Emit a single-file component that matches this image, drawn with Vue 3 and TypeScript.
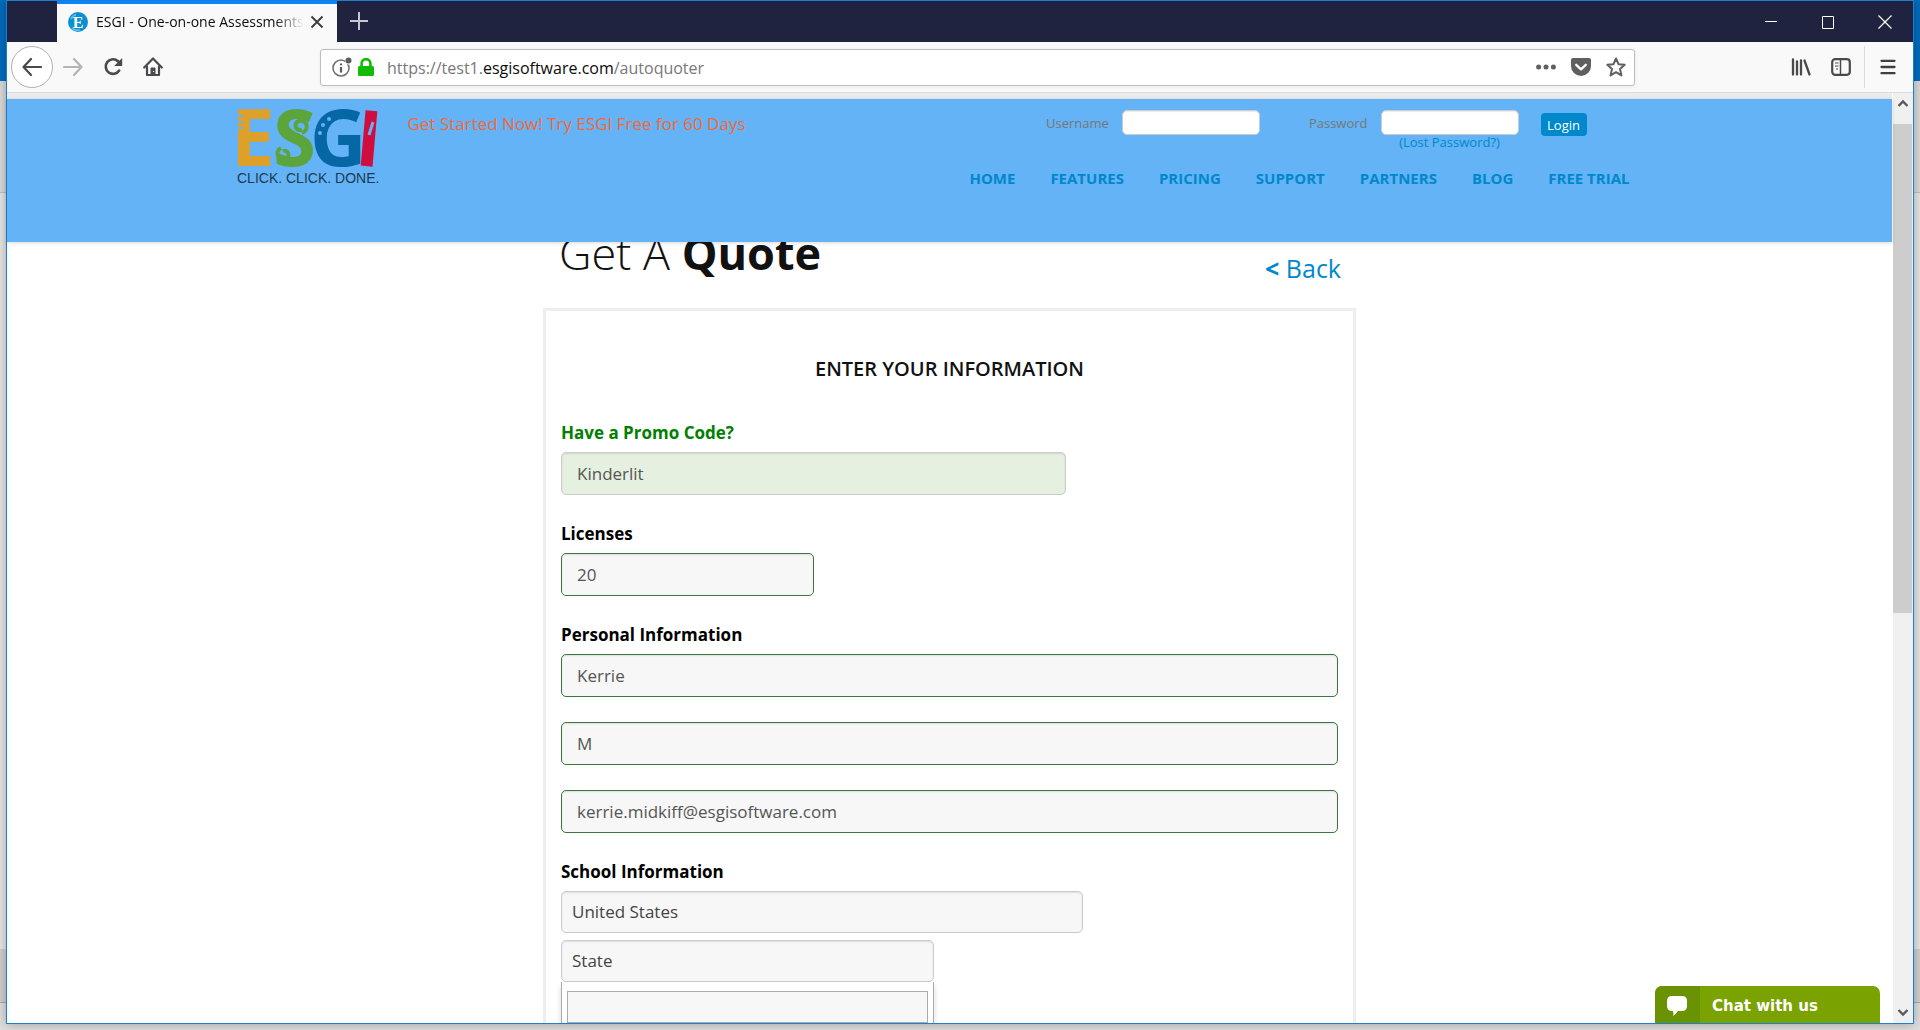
<script setup lang="ts">
import { ref } from 'vue'

interface PersonField {
  id: string
  label: string
  value: string
}

const navLinks: string[] = ['HOME', 'FEATURES', 'PRICING', 'SUPPORT', 'PARTNERS', 'BLOG', 'FREE TRIAL']

const promoCode = ref('Kinderlit')
const licenses = ref('20')
const country = ref('United States')
const state = ref('State')
const stateSearch = ref('')
const username = ref('')
const password = ref('')

const person = ref<PersonField[]>([
  { id: 'first-name', label: 'First name', value: 'Kerrie' },
  { id: 'last-name', label: 'Last name', value: 'M' },
  { id: 'email', label: 'Email', value: 'kerrie.midkiff@esgisoftware.com' },
])
</script>

<template>
  <div class="desktop">
    <div class="window">
      <div class="tab-strip">
        <div class="tab">
          <svg class="favicon" viewBox="0 0 20 20" width="20" height="20" aria-hidden="true">
            <circle cx="10" cy="10" r="10" fill="#0a8fd0" />
            <path d="M3 7 Q5 3 8 3 M4 16 Q7 19 12 18" fill="none" stroke="#5db8e4" stroke-width="2" />
            <text x="10" y="16" text-anchor="middle" class="favicon-letter">E</text>
          </svg>
          <span class="tab-title">ESGI - One-on-one Assessments</span>
          <button class="icon-btn tab-close" aria-label="Close tab">
            <svg viewBox="0 0 14 14" width="14" height="14"><path d="M1.5 1.5l11 11M12.500 1.500l-11 11" stroke="#3a3a3c" stroke-width="1.800" /></svg>
          </button>
        </div>
        <button class="icon-btn new-tab" aria-label="New tab">
          <svg viewBox="0 0 18 18" width="18" height="18"><path d="M9 0v18M0 9h18" stroke="#c6c7d0" stroke-width="2" /></svg>
        </button>
        <div class="window-controls">
          <button class="icon-btn" aria-label="Minimize">
            <svg viewBox="0 0 14 14" width="14" height="14"><path d="M1 6.500h12" stroke="#fff" /></svg>
          </button>
          <button class="icon-btn" aria-label="Maximize">
            <svg viewBox="0 0 14 14" width="14" height="14"><path d="M1.500 1.500h11v12h-11z" fill="none" stroke="#fff" /></svg>
          </button>
          <button class="icon-btn" aria-label="Close window">
            <svg viewBox="0 0 14 14" width="14" height="14"><path d="M.5.5l13 13M13.500.5l-13 13" stroke="#fff" stroke-width="1.200" /></svg>
          </button>
        </div>
      </div>

      <div class="toolbar">
        <div class="history">
          <button class="back" aria-label="Back">
            <svg viewBox="0 0 20 20" width="20" height="20" fill="none" stroke="#4a4a4c" stroke-width="2.200" stroke-linecap="round" stroke-linejoin="round"><path d="M19 10H1.500M9 2L1.500 10 9 18" /></svg>
          </button>
          <button class="icon-btn" aria-label="Forward">
            <svg viewBox="0 0 20 20" width="20" height="20" fill="none" stroke="#b4b4b5" stroke-width="2.200" stroke-linecap="round" stroke-linejoin="round"><path d="M1 10h17.500M11 2l7.500 8-7.500 8" /></svg>
          </button>
          <button class="icon-btn" aria-label="Reload">
            <svg viewBox="0 0 20 20" width="20" height="20" fill="none" stroke="#4a4a4c" stroke-width="2.600"><path d="M16.200 13.500A7.300 7.300 0 1 1 15 4.200L17 6.500" stroke-linecap="round" /><path d="M19.200 1v8h-8z" fill="#4a4a4c" stroke="none" /></svg>
          </button>
          <button class="icon-btn" aria-label="Home">
            <svg viewBox="0 0 20 20" width="20" height="20" fill="none" stroke="#4a4a4c" stroke-width="2.200" stroke-linecap="round" stroke-linejoin="round"><path d="M1.200 10.500L10 1.500l8.800 9" /><path d="M4 9.500V18h12V9.500" /><path d="M8 18v-7h4v7z" fill="#4a4a4c" stroke-width="1" /><path d="M10.500 14.500h.2" stroke="#fff" stroke-width="1" /></svg>
          </button>
        </div>
        <div class="url-bar">
          <svg class="info" viewBox="0 0 22 20" width="22" height="20"><circle cx="9" cy="11" r="8" fill="none" stroke="#737373" stroke-width="1.600" /><path d="M9 10v5.500M9 6.500v1.800" stroke="#5c5c5c" stroke-width="2.200" /><circle cx="17" cy="3.500" r="4" fill="#fff" /><circle cx="16.500" cy="3.500" r="3" fill="#5c5c5c" /></svg>
          <svg viewBox="0 0 16 18" width="16" height="18"><rect y="8" width="16" height="10" rx="1.500" fill="#12bc00" /><path d="M3.600 9V5.500a4.400 4.400 0 0 1 8.800 0V9" fill="none" stroke="#12bc00" stroke-width="2.600" /></svg>
          <span class="url">https://test1.<b>esgisoftware.com</b>/autoquoter</span>
          <div class="url-actions">
            <svg viewBox="0 0 20 20" width="20" height="20" fill="#5f5f61"><circle cx="2.600" cy="10" r="2.500" /><circle cx="10" cy="10" r="2.500" /><circle cx="17.400" cy="10" r="2.500" /></svg>
            <svg viewBox="0 0 20 20" width="20" height="20"><path d="M2 1h16a2 2 0 0 1 2 2v6a10 10 0 0 1-20 0V3a2 2 0 0 1 2-2z" fill="#5f5f61" /><path d="M5.200 7.800L10 12.300l4.800-4.500" fill="none" stroke="#fff" stroke-width="2.300" stroke-linecap="round" stroke-linejoin="round" /></svg>
            <svg viewBox="0 0 20 20" width="20" height="20"><path d="M10 1.500l2.500 5.700 6.200.600-4.700 4.100 1.400 6.500L10 15.200l-5.400 3.200L6 11.900 1.300 7.800l6.200-.6z" fill="none" stroke="#5f5f61" stroke-width="2" stroke-linejoin="round" /></svg>
          </div>
        </div>
        <div class="tools">
          <button class="icon-btn" aria-label="Library">
            <svg viewBox="0 0 20 18" width="20" height="18" stroke="#4a4a4c" stroke-width="2.300" stroke-linecap="round"><path d="M2 1.500v15M6 3.500v13M10 2.500v14M13.500 2.500l5 14" /></svg>
          </button>
          <button class="icon-btn" aria-label="Sidebars">
            <svg viewBox="0 0 20 18" width="20" height="18" fill="none" stroke="#4a4a4c"><rect x="1.200" y="1.200" width="17.600" height="15.600" rx="3" stroke-width="2.200" /><path d="M9.500 1.500v15" stroke-width="1.500" /><path d="M4 5h3.500M4 8h3.500M5 11h2" stroke-width="1.200" /></svg>
          </button>
          <span class="divider"></span>
          <button class="icon-btn" aria-label="Menu">
            <svg viewBox="0 0 16 16" width="16" height="16" stroke="#3f3f41" stroke-width="2.300" stroke-linecap="round"><path d="M1.500 1.800h13M1.500 8h13M1.500 14.200h13" /></svg>
          </button>
        </div>
      </div>

      <div class="viewport">
        <div class="page">
          <header class="site-header">
            <div class="header-inner">
              <svg class="logo" viewBox="0 0 146 78" width="146" height="78" role="img" aria-label="ESGI">
                <g class="logo-letters">
                  <text x="-6" y="57" fill="#dca02b">E</text>
                  <text x="36" y="57" fill="#5ba53c">S</text>
                  <text x="73" y="57" fill="#0567a6">G</text>
                  <text x="119" y="57" fill="#cf0d3e" transform="rotate(5 130 30)">I</text>
                </g>
                <path d="M0 7h6M0 13h6M0 19h6" stroke="#63b3f6" stroke-width="2" />
                <path d="M65 21c-7 1-9-7-3-9 8-2 11 9 3 12M46 42c5-2 8 5 2 8-8 1-10-8-4-11" fill="none" stroke="#5ba53c" stroke-width="4" />
                <g fill="#63b3f6"><circle cx="92" cy="10" r="2" /><circle cx="86" cy="16" r="2" /><circle cx="83" cy="24" r="2" /></g>
                <path d="M136 13l-4 13" stroke="#63b3f6" stroke-width="3" />
                <text x="0" y="74" class="logo-tagline">CLICK. CLICK. DONE.</text>
              </svg>
              <a class="trial" href="#">Get Started Now! Try ESGI Free for 60 Days</a>
              <div class="header-side">
                <form class="login" @submit.prevent>
                  <label for="username">Username</label>
                  <input id="username" v-model="username" type="text" class="username" />
                  <label for="password">Password</label>
                  <div class="password-col">
                    <input id="password" v-model="password" type="password" />
                    <a href="#">(Lost Password?)</a>
                  </div>
                  <button type="submit">Login</button>
                </form>
                <nav>
                  <a v-for="link in navLinks" :key="link" href="#">{{ link }}</a>
                </nav>
              </div>
            </div>
          </header>

          <main>
            <div class="column">
              <div class="title-row">
                <h1>Get A <strong>Quote</strong></h1>
                <a class="back-link" href="#"><b>&lt;</b> Back</a>
              </div>
              <form class="card" @submit.prevent>
                <h2>ENTER YOUR INFORMATION</h2>
                <section>
                  <label class="heading promo" for="promo">Have a Promo Code?</label>
                  <input id="promo" v-model="promoCode" class="field promo-field" type="text" />
                </section>
                <section>
                  <label class="heading" for="licenses">Licenses</label>
                  <input id="licenses" v-model="licenses" class="field valid licenses-field" type="text" />
                </section>
                <section>
                  <h3 class="heading">Personal Information</h3>
                  <div class="stack">
                    <input v-for="f in person" :id="f.id" :key="f.id" v-model="f.value" class="field valid" type="text" :aria-label="f.label" />
                  </div>
                </section>
                <section>
                  <h3 class="heading">School Information</h3>
                  <select v-model="country" class="field country" aria-label="Country">
                    <option>United States</option>
                  </select>
                  <div class="state">
                    <select v-model="state" class="field" aria-label="State">
                      <option>State</option>
                    </select>
                    <div class="dropdown">
                      <input v-model="stateSearch" type="text" aria-label="Search states" />
                    </div>
                  </div>
                </section>
              </form>
            </div>
          </main>

          <button class="chat">
            <span class="chat-icon">
              <svg viewBox="0 0 22 20" width="22" height="20"><path d="M6 0h10q5 0 5 5v5q0 5-5 5h-4q-2 3-5 5 1-2 0-5H6q-5 0-5-5V5q0-5 5-5z" fill="#fff" /></svg>
            </span>
            <span class="chat-text">Chat with us</span>
          </button>
        </div>

        <div class="scrollbar">
          <svg viewBox="0 0 20 20" width="20" height="20"><path d="M5.500 13L10 8.500l4.500 4.500" fill="none" stroke="#5a5a5a" stroke-width="2.400" /></svg>
          <div class="track"><div class="thumb"></div></div>
          <svg viewBox="0 0 20 20" width="20" height="20"><path d="M5.500 7l4.500 4.500L14.500 7" fill="none" stroke="#5a5a5a" stroke-width="2.400" /></svg>
        </div>
      </div>
    </div>
  </div>
</template>

<style>
body {
  overflow: hidden;
}
</style>

<style scoped>
* {
  box-sizing: border-box;
}

.desktop {
  height: 100vh;
  padding: 0 6px 6px;
  background: linear-gradient(#006cbe 81px, #dadada 81px, #dadada 192px, #c2c2c2 192px, #c2c2c2 193px, #e6e6e6 193px, #e6e6e6 949px, #d0d0d0 949px, #d0d0d0 1002px, #a8a8a8 1002px, #a8a8a8 1003px, #dedede 1003px);
  font-family: 'Open Sans', 'Noto Sans', sans-serif;
}

.window {
  display: flex;
  flex-direction: column;
  height: 100%;
  border: 1px solid #1b80d1;
  background: #fff;
  box-shadow: 0 0 10px rgba(0, 0, 0, 0.3);
}

a {
  color: #08c;
  text-decoration: none;
}

button {
  border: 0;
  padding: 0;
  font-family: inherit;
}

svg {
  display: block;
  flex: none;
}

.icon-btn {
  display: flex;
  align-items: center;
  justify-content: center;
  background: none;
}

.tab-strip {
  display: flex;
  height: 41px;
  flex: none;
  padding-left: 50px;
  background: #202340;
}

.tab {
  display: flex;
  align-items: center;
  width: 280px;
  padding: 0 13px 2px 11px;
  border-top: 3px solid #0a84ff;
  background: #f9f9fa;
}

.favicon-letter {
  font: bold 16px 'Liberation Serif', serif;
  fill: #fff;
}

.tab-title {
  flex: 1;
  margin: 0 6px 0 8px;
  overflow: hidden;
  white-space: nowrap;
  font-size: 14px;
  line-height: 20px;
  color: #0c0c0d;
  mask-image: linear-gradient(90deg, #000 86%, transparent);
}

.new-tab {
  width: 44px;
  padding-bottom: 1px;
}

.window-controls {
  display: flex;
  gap: 43px;
  margin-left: auto;
  padding-right: 21px;
}

.toolbar {
  display: flex;
  align-items: center;
  height: 51px;
  flex: none;
  padding: 0 17px 0 4px;
  border-bottom: 1px solid #dcdcdc;
  background: #f9f9fa;
}

.history {
  display: flex;
  align-items: center;
  gap: 20px;
  flex: none;
  width: 309px;
}

.back {
  display: flex;
  align-items: center;
  justify-content: center;
  width: 42px;
  height: 42px;
  margin-right: -10px;
  border: 1px solid #b1b1b1;
  border-radius: 50%;
  background: #fff;
}

.url-bar {
  display: flex;
  align-items: center;
  flex: 1;
  height: 37px;
  padding: 0 8px 0 11px;
  border: 1px solid #bdbdbe;
  border-radius: 3px;
  background: #fff;
  box-shadow: 0 1px 4px rgba(0, 0, 0, 0.06);
}

.info {
  margin-right: 4px;
}

.url {
  margin-left: 13px;
  padding-top: 1px;
  font-size: 16px;
  line-height: 24px;
  color: #77777a;
}

.url b {
  font-weight: 400;
  color: #0c0c0d;
}

.url-actions {
  display: flex;
  gap: 15px;
  margin-left: auto;
}

.tools {
  display: flex;
  align-items: center;
  flex: none;
  gap: 20px;
  padding-left: 156px;
}

.divider {
  width: 1px;
  height: 42px;
  margin: 0 -5px 0 -7px;
  background: #dcdcdd;
}

.viewport {
  display: flex;
  flex: 1;
  min-height: 0;
}

.page {
  position: relative;
  display: flex;
  flex-direction: column;
  flex: 1;
  min-width: 0;
  border-top: 6px solid #ebebeb;
}

.site-header {
  flex: none;
  height: 143px;
  background: #63b3f6;
  box-shadow: 0 1px 4px rgba(0, 0, 0, 0.15);
  z-index: 1;
}

.header-inner {
  display: flex;
  align-items: flex-start;
  max-width: 1426px;
  margin: 0 auto;
  padding-top: 10px;
}

.logo {
  overflow: visible;
}

.logo-letters {
  font: 700 78px 'Open Sans', sans-serif;
}

.logo-tagline {
  font: 14px 'Liberation Sans', Arial, sans-serif;
  fill: #1b3a52;
}

.trial {
  margin-left: 25px;
  font-size: 17px;
  line-height: 29px;
  color: #f26a36;
}

.header-side {
  display: flex;
  flex-direction: column;
  align-items: flex-end;
  margin-left: auto;
}

.login {
  display: flex;
  align-items: flex-start;
  height: 50px;
  padding: 1px 76px 0 0;
  font-size: 13px;
}

.login label {
  margin-right: 13px;
  line-height: 26px;
  color: #777;
}

.login input {
  display: block;
  width: 138px;
  height: 25px;
  border: 1px solid #ccc;
  border-radius: 5px;
  background: #fff;
  box-shadow: inset 0 1px 1px rgba(0, 0, 0, 0.08);
}

.login .username {
  margin-right: 49px;
}

.password-col a {
  display: block;
  line-height: 14px;
  text-align: center;
}

.login button {
  width: 46px;
  height: 23px;
  margin: 3px 0 0 22px;
  border-radius: 4px;
  background: #08c;
  color: #fff;
  font-size: 13px;
  line-height: 24px;
}

nav {
  display: flex;
  gap: 35px;
  padding-right: 33px;
}

nav a {
  font-size: 15px;
  font-weight: 700;
  line-height: 38px;
}

main {
  flex: 1;
  min-height: 0;
  overflow: hidden;
}

.column {
  max-width: 813px;
  margin: -19px auto 0;
}

.title-row {
  display: flex;
  align-items: flex-end;
  justify-content: space-between;
  padding: 0 15px 0 16px;
}

h1 {
  margin: 0;
  font-size: 45px;
  font-weight: 300;
  line-height: 60px;
  color: #111;
}

h1 strong {
  font-weight: 700;
}

.back-link {
  font-size: 25px;
  line-height: 30px;
}

.card {
  margin-top: 25px;
  padding: 44px 15px 0;
  border: 3px solid #eee;
  border-bottom: 0;
}

h2 {
  margin: 0 0 38px;
  font-size: 20px;
  font-weight: 600;
  line-height: 28px;
  text-align: center;
  color: #111;
}

section {
  margin-bottom: 27px;
}

.heading {
  display: block;
  margin: 0 0 7px;
  font-size: 17px;
  font-weight: 700;
  line-height: 24px;
  color: #000;
}

.promo {
  color: #008000;
}

.field {
  display: block;
  width: 100%;
  height: 43px;
  padding: 0 15px 1px;
  border: 1px solid #ccc;
  border-radius: 5px;
  background: #f7f7f7;
  box-shadow: inset 0 1px 2px rgba(0, 0, 0, 0.1);
  font-family: inherit;
  font-size: 17px;
  color: #555;
}

.valid {
  border-color: #3c763d;
}

.promo-field {
  max-width: 505px;
  background: #e5f0e0;
}

.licenses-field {
  max-width: 253px;
}

.stack {
  display: flex;
  flex-direction: column;
  gap: 25px;
}

select.field {
  height: 42px;
  padding: 0 10px 1px;
  appearance: none;
  color: #444;
}

.country {
  max-width: 522px;
  margin-bottom: 7px;
}

.state {
  max-width: 373px;
}

.dropdown {
  padding: 9px 5px;
  border: 1px solid #aaa;
  border-top: 0;
  background: #fff;
  box-shadow: 0 4px 6px rgba(0, 0, 0, 0.15);
}

.dropdown input {
  display: block;
  width: 100%;
  height: 32px;
  border: 1px solid #aaa;
  background: #f7f7f7;
}

.chat {
  position: absolute;
  right: 12px;
  bottom: 0;
  z-index: 2;
  display: flex;
  width: 225px;
  height: 37px;
  overflow: hidden;
  border-radius: 7px 7px 0 0;
  background: #7aa302;
  color: #fff;
}

.chat-icon {
  display: flex;
  align-items: center;
  justify-content: center;
  width: 45px;
  height: 100%;
  padding: 2px 2px 0 0;
  background: #6a9303;
}

.chat-text {
  padding-left: 12px;
  font: bold 15px/40px 'DejaVu Sans', Verdana, sans-serif;
}

.scrollbar {
  display: flex;
  flex-direction: column;
  flex: none;
  width: 21px;
  border-left: 1px solid #fff;
  background: #f0f0f0;
}

.track {
  flex: 1;
  padding-top: 11px;
}

.thumb {
  width: 19px;
  height: 55.6%;
  background: #cdcdcd;
}
</style>
